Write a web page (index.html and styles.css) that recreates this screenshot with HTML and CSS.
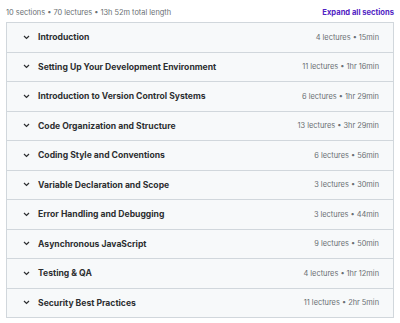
FILE: index.html
```html
<!DOCTYPE html>
<html lang="en">
<head>
    <meta charset="UTF-8">
    <title>Course content</title>
    <link rel="stylesheet" href="styles.css">
</head>
<body>
    <div class="summary">
        <span>10 sections • 70 lectures • 13h 52m total length</span>
        <a class="expand" href="#">Expand all sections</a>
    </div>

    <div class="sections">
        <div class="section">
            <span class="chev"><svg width="7" height="5" viewBox="0 0 7 5"><path d="M1 1l2.5 2.5L6 1" fill="none" stroke="#2d2f31" stroke-width="1.2"/></svg></span>
            <span class="title">Introduction</span>
            <span class="meta">4 lectures • 15min</span>
        </div>
        <div class="section">
            <span class="chev"><svg width="7" height="5" viewBox="0 0 7 5"><path d="M1 1l2.5 2.5L6 1" fill="none" stroke="#2d2f31" stroke-width="1.2"/></svg></span>
            <span class="title">Setting Up Your Development Environment</span>
            <span class="meta">11 lectures • 1hr 16min</span>
        </div>
        <div class="section">
            <span class="chev"><svg width="7" height="5" viewBox="0 0 7 5"><path d="M1 1l2.5 2.5L6 1" fill="none" stroke="#2d2f31" stroke-width="1.2"/></svg></span>
            <span class="title">Introduction to Version Control Systems</span>
            <span class="meta">6 lectures • 1hr 29min</span>
        </div>
        <div class="section">
            <span class="chev"><svg width="7" height="5" viewBox="0 0 7 5"><path d="M1 1l2.5 2.5L6 1" fill="none" stroke="#2d2f31" stroke-width="1.2"/></svg></span>
            <span class="title">Code Organization and Structure</span>
            <span class="meta">13 lectures • 3hr 29min</span>
        </div>
        <div class="section">
            <span class="chev"><svg width="7" height="5" viewBox="0 0 7 5"><path d="M1 1l2.5 2.5L6 1" fill="none" stroke="#2d2f31" stroke-width="1.2"/></svg></span>
            <span class="title">Coding Style and Conventions</span>
            <span class="meta">6 lectures • 56min</span>
        </div>
        <div class="section">
            <span class="chev"><svg width="7" height="5" viewBox="0 0 7 5"><path d="M1 1l2.5 2.5L6 1" fill="none" stroke="#2d2f31" stroke-width="1.2"/></svg></span>
            <span class="title">Variable Declaration and Scope</span>
            <span class="meta">3 lectures • 30min</span>
        </div>
        <div class="section">
            <span class="chev"><svg width="7" height="5" viewBox="0 0 7 5"><path d="M1 1l2.5 2.5L6 1" fill="none" stroke="#2d2f31" stroke-width="1.2"/></svg></span>
            <span class="title">Error Handling and Debugging</span>
            <span class="meta">3 lectures • 44min</span>
        </div>
        <div class="section">
            <span class="chev"><svg width="7" height="5" viewBox="0 0 7 5"><path d="M1 1l2.5 2.5L6 1" fill="none" stroke="#2d2f31" stroke-width="1.2"/></svg></span>
            <span class="title">Asynchronous JavaScript</span>
            <span class="meta">9 lectures • 50min</span>
        </div>
        <div class="section">
            <span class="chev"><svg width="7" height="5" viewBox="0 0 7 5"><path d="M1 1l2.5 2.5L6 1" fill="none" stroke="#2d2f31" stroke-width="1.2"/></svg></span>
            <span class="title">Testing &amp; QA</span>
            <span class="meta">4 lectures • 1hr 12min</span>
        </div>
        <div class="section">
            <span class="chev"><svg width="7" height="5" viewBox="0 0 7 5"><path d="M1 1l2.5 2.5L6 1" fill="none" stroke="#2d2f31" stroke-width="1.2"/></svg></span>
            <span class="title">Security Best Practices</span>
            <span class="meta">11 lectures • 2hr 5min</span>
        </div>
    </div>
</body>
</html>
```

FILE: styles.css
```css
body {
    margin: 0;
    padding: 4px 6px 0 6px;
    font-family: Inter, "Noto Sans", sans-serif;
    color: #2d2f31;
    background: #fff;
}
.summary {
    display: flex;
    justify-content: space-between;
    align-items: center;
    height: 17px;
    padding-bottom: 1px;
    font-size: 7.4px;
    color: #6a6f73;
}
.expand {
    color: #5022c3;
    font-weight: 700;
    text-decoration: none;
    font-size: 7.6px;
}
.sections {
    border: 1px solid #d1d7dc;
    border-bottom: none;
}
.section {
    display: flex;
    align-items: center;
    height: 28.5px;
    padding: 0 14px 0 16px;
    background: #f7f9fa;
    border-bottom: 1px solid #d1d7dc;
}
.chev {
    display: flex;
    width: 15px;
}
.title {
    flex: 1;
    font-size: 8.6px;
    font-weight: 700;
}
.meta {
    font-size: 7.4px;
    color: #6a6f73;
}
```
